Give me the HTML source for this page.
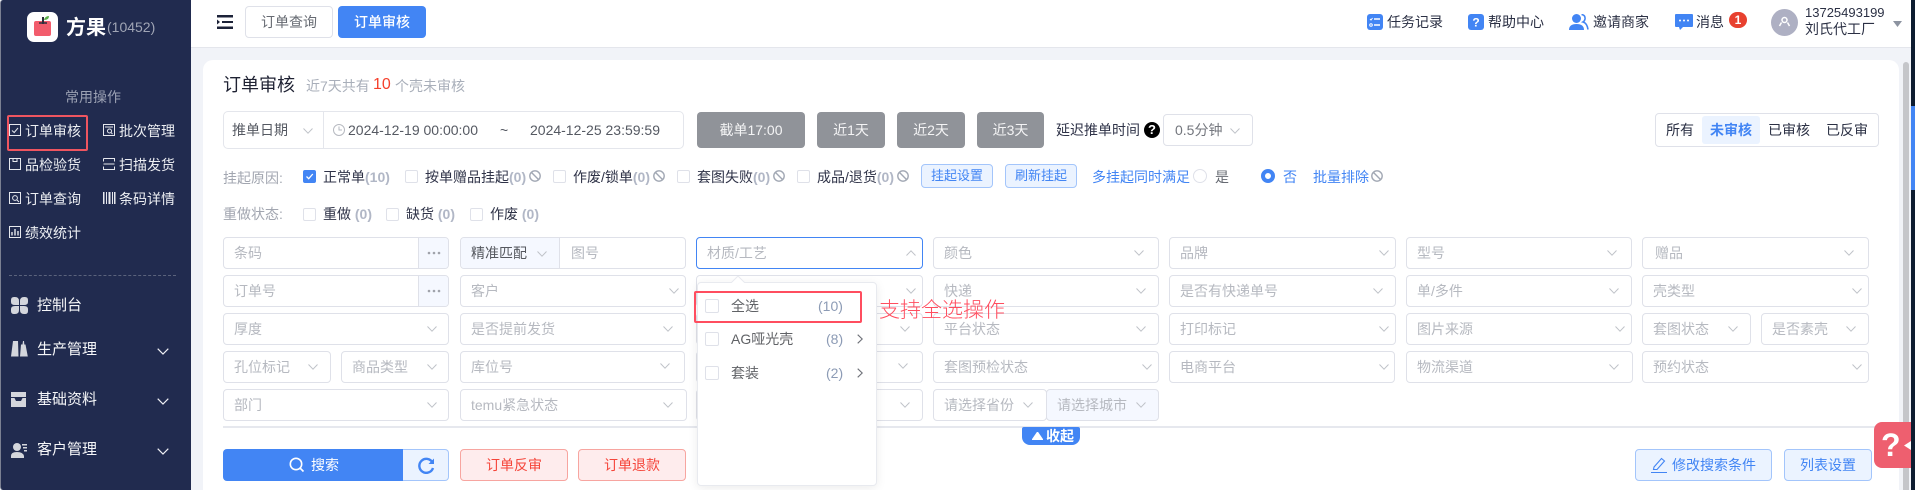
<!DOCTYPE html>
<html lang="zh-CN"><head><meta charset="utf-8"><title>订单审核</title>
<style>
html,body{margin:0;padding:0}
body{width:1915px;height:490px;overflow:hidden;position:relative;background:#f1f3f8;font:14px/20px "Liberation Sans","Noto Sans CJK SC",sans-serif;color:#2b3044}
div,span,svg{position:absolute;box-sizing:border-box}
span.i{position:static}
.t{height:20px;line-height:20px;white-space:nowrap}
.side{left:0;top:0;width:191px;height:490px;background:#212b4f;border-left:1px solid #7b8092;border-radius:3px 0 0 3px}
.q{color:#eceef2;font-size:14px}
.n{color:#f6f7f9;font-size:15px}
.f{height:32px;background:#fff;border:1px solid #dfe1e9;border-radius:4px}
.p{color:#b6b9c0;white-space:nowrap;height:20px;line-height:20px}
.ck{width:13px;height:13px;border:1px solid #dfe1e9;border-radius:2px;background:#fff}
.l{color:#2f3348}
.g{color:#b1b7c6;font-weight:700}
.gb{top:112px;height:36px;background:#909399;color:#f4f4f5;border-radius:4px;text-align:center;line-height:36px}
.bb{top:164px;height:24px;width:72px;border:1px solid #a3c5fb;background:#ebf3ff;color:#4285f4;font-size:13px;border-radius:4px;text-align:center;line-height:22px}
.rb{top:449px;height:32px;width:108px;background:#feeced;border:1px solid #f7a5a0;color:#f5453a;border-radius:4px;text-align:center;line-height:30px}
.blue{color:#4285f4}
</style></head><body>
<svg width="0" height="0" style="left:0;top:0"><defs>
<symbol id="dn" viewBox="0 0 10 6"><path d="M.5.5 5 5.2 9.5.5" fill="none" stroke="#bfc2c8" stroke-width="1"/></symbol>
<symbol id="wd" viewBox="0 0 12 7"><path d="M.7.7 6 6 11.3.7" fill="none" stroke="#f0f1f5" stroke-width="1.2"/></symbol>
<symbol id="ban" viewBox="0 0 12 12"><circle cx="6" cy="6" r="5.2" fill="none" stroke="#a2a8b4" stroke-width="1.4"/><path d="M2.4 2.4 9.6 9.6" stroke="#a2a8b4" stroke-width="1.4"/></symbol>
<symbol id="rt" viewBox="0 0 6 10"><path d="M.7.7 5.2 5 .7 9.3" fill="none" stroke="#6d7078" stroke-width="1.1"/></symbol>
<symbol id="dots" viewBox="0 0 14 4"><circle cx="2" cy="2" r="1.3" fill="#a0a3ab"/><circle cx="7" cy="2" r="1.3" fill="#a0a3ab"/><circle cx="12" cy="2" r="1.3" fill="#a0a3ab"/></symbol>
</defs></svg>

<!-- sidebar -->
<div class="side"></div>
<div style="left:27px;top:12px;width:31px;height:30px;background:#fff;border-radius:7px"></div>
<svg style="left:33px;top:15px" width="19" height="22" viewBox="0 0 19 22"><path d="M1 8q0-2 2-2h13q2 0 2 2v11q0 2-2 2H3q-2 0-2-2z" fill="#f25c6c"/><path d="M10 2v7" stroke="#2c2f3c" stroke-width="2"/><path d="M6 8h8" stroke="#2c2f3c" stroke-width="1.500"/><path d="M11 5q1-4 5-4q0 4-5 4z" fill="#5ab04a"/></svg>
<div class="t" style="left:66px;top:17px;color:#fff;font-size:20px;font-weight:700;line-height:22px;height:22px">方果</div>
<div class="t" style="left:107px;top:17px;color:#a0a5b5;font-size:14px">(10452)</div>
<div class="t" style="left:65px;top:87px;color:#9ba1b3">常用操作</div>
<div style="left:7px;top:115px;width:81px;height:36px;border:2px solid #ef5560;border-radius:2px"></div>

<svg style="left:9px;top:124px" width="13" height="13" viewBox="0 0 13 13" fill="none" stroke="#e6e8ee"><rect x=".5" y=".5" width="11" height="11"/><path d="M3 6.500 5.200 8.500 9 4"/></svg>
<div class="t q" style="left:25px;top:121px">订单审核</div>
<svg style="left:103px;top:124px" width="13" height="13" viewBox="0 0 13 13" fill="none" stroke="#e6e8ee"><rect x=".5" y=".5" width="11" height="11"/><path d="M2 3h8"/><circle cx="6.500" cy="7" r="2"/><path d="m8 8.500 1.500 1.500"/></svg>
<div class="t q" style="left:119px;top:121px">批次管理</div>

<svg style="left:9px;top:158px" width="13" height="13" viewBox="0 0 13 13" fill="none" stroke="#e6e8ee"><path d="M.5.5h11v11H.5zM4 .5v3h4v-3"/></svg>
<div class="t q" style="left:25px;top:155px">品检验货</div>
<svg style="left:103px;top:158px" width="13" height="13" viewBox="0 0 13 13" fill="none" stroke="#e6e8ee"><path d="M.5.5h11v3M.5.5v3M.5 6h11M.5 8.500v3h11v-3"/></svg>
<div class="t q" style="left:119px;top:155px">扫描发货</div>

<svg style="left:9px;top:192px" width="13" height="13" viewBox="0 0 13 13" fill="none" stroke="#e6e8ee"><rect x=".5" y=".5" width="11" height="11"/><circle cx="6" cy="6" r="2.400"/><path d="m8 8 2 2"/></svg>
<div class="t q" style="left:25px;top:189px">订单查询</div>
<svg style="left:103px;top:192px" width="13" height="13" viewBox="0 0 13 13" fill="#e6e8ee"><rect x="0" width="1.500" height="12"/><rect x="3" width="1" height="12"/><rect x="5.500" width="2" height="12"/><rect x="9" width="1" height="12"/><rect x="11" width="1.500" height="12"/></svg>
<div class="t q" style="left:119px;top:189px">条码详情</div>

<svg style="left:9px;top:226px" width="13" height="13" viewBox="0 0 13 13" fill="none" stroke="#e6e8ee"><rect x=".5" y=".5" width="11" height="11"/><path d="M3 9.500V6M6 9.500V3M9 9.500V5" stroke-width="1.400"/></svg>
<div class="t q" style="left:25px;top:223px">绩效统计</div>

<div style="left:9px;top:275px;width:167px;border-top:1px dashed #5b637c"></div>

<svg style="left:11px;top:297px" width="17" height="17" viewBox="0 0 17 17" fill="#d4d6dc"><path d="M0 3q0-3 3-3h1q4 0 4 4v4H4Q0 8 0 5zM9 4q0-4 4-4h1q3 0 3 3v2q0 3-4 3H9zM0 12q0-3 4-3h4v4q0 4-4 4H3q-3 0-3-3zM9 9h4q4 0 4 3v2q0 3-3 3h-1q-4 0-4-4z"/></svg>
<div class="t n" style="left:37px;top:296px">控制台</div>

<svg style="left:11px;top:341px" width="17" height="16" viewBox="0 0 17 16" fill="#d4d6dc"><path d="M2 0h5l.5 15.500H0zM10 3.500h1.500l.5-3.500h1l.3 3.500h1.200l2.300 12H9z"/></svg>
<div class="t n" style="left:37px;top:340px">生产管理</div>
<svg style="left:157px;top:348px" width="12" height="7"><use href="#wd"/></svg>

<svg style="left:11px;top:392px" width="15" height="15" viewBox="0 0 15 15" fill="#d4d6dc"><path d="M0 0h15v5H0zM0 6h3.500l1.500 3h5l1.500-3H15v9H0z"/></svg>
<div class="t n" style="left:37px;top:390px">基础资料</div>
<svg style="left:157px;top:398px" width="12" height="7"><use href="#wd"/></svg>

<svg style="left:11px;top:443px" width="16" height="15" viewBox="0 0 16 15" fill="#d4d6dc"><circle cx="6" cy="4" r="4"/><path d="M0 15v-2q0-4 6-4t7 4v2zM11 1h5v1.500h-5zM12 4h4v1.500h-4zM13 7h3v1.500h-3z"/></svg>
<div class="t n" style="left:37px;top:440px">客户管理</div>
<svg style="left:157px;top:448px" width="12" height="7"><use href="#wd"/></svg>

<!-- top bar -->
<div style="left:191px;top:0;width:1720px;height:48px;background:#fff;border-bottom:1px solid #e4e6ec"></div>
<svg style="left:217px;top:15px" width="16" height="14" viewBox="0 0 16 14" fill="#1c2238"><rect x="0" y="0" width="16" height="2.500"/><rect x="5" y="6" width="11" height="2"/><rect x="0" y="11.500" width="16" height="2.500"/><path d="M0 4.500 3 7 0 9.500z"/></svg>
<div class="t" style="left:245px;top:6px;width:88px;height:32px;border:1px solid #dfe1e9;border-radius:4px;text-align:center;line-height:30px;color:#666a72;background:#fff">订单查询</div>
<div class="t" style="left:338px;top:6px;width:88px;height:32px;border-radius:4px;text-align:center;line-height:32px;color:#fff;background:#4285f4;font-weight:500">订单审核</div>

<svg style="left:1367px;top:14px" width="16" height="16" viewBox="0 0 16 16"><rect width="16" height="16" rx="3" fill="#4285f4"/><path d="M7 5h6M7 11h6" stroke="#fff" stroke-width="1.400"/><path d="m3 5 1 1 1.500-2" stroke="#fff" fill="none"/><circle cx="4" cy="11" r="1.300" stroke="#fff" fill="none"/></svg>
<div class="t" style="left:1387px;top:12px">任务记录</div>
<svg style="left:1468px;top:14px" width="16" height="16" viewBox="0 0 16 16"><rect width="16" height="16" rx="3" fill="#4285f4"/><text x="8" y="12.500" text-anchor="middle" font-size="12" font-weight="700" fill="#fff" font-family="Liberation Sans">?</text></svg>
<div class="t" style="left:1488px;top:12px">帮助中心</div>
<svg style="left:1569px;top:14px" width="20" height="16" viewBox="0 0 20 16"><circle cx="7.500" cy="4.500" r="4.500" fill="#4285f4"/><path d="M0 16q0-6 7.500-6T15 16z" fill="#4285f4"/><path d="M12.500 .5q4 .5 3.500 4.500-.3 2-2 3 4 1 5 7.500" fill="none" stroke="#4285f4" stroke-width="1.600"/></svg>
<div class="t" style="left:1593px;top:12px">邀请商家</div>
<svg style="left:1675px;top:14px" width="18" height="17" viewBox="0 0 18 17"><path d="M1 0h16q1 0 1 1v11q0 1-1 1H8l-3 3-1-3H1q-1 0-1-1V1q0-1 1-1z" fill="#4285f4"/><circle cx="5" cy="6.500" r="1" fill="#fff"/><circle cx="9" cy="6.500" r="1" fill="#fff"/><circle cx="13" cy="6.500" r="1" fill="#fff"/></svg>
<div class="t" style="left:1696px;top:12px">消息</div>
<div style="left:1729px;top:12px;width:18px;height:16px;background:#e8412f;border-radius:8px;color:#fff;font-size:12px;font-weight:700;line-height:16px;text-align:center">1</div>
<div style="left:1771px;top:9px;width:27px;height:27px;border-radius:50%;background:#aeb0c3"></div>
<svg style="left:1778px;top:16px" width="13" height="13" viewBox="0 0 13 13" fill="none" stroke="#fff" stroke-width="1.500"><circle cx="6.500" cy="4" r="2.500"/><path d="M3.500 6.500 1.500 10M9.500 6.500l2 3.500"/></svg>
<div class="t" style="left:1805px;top:3px;font-size:13px">13725493199</div>
<div class="t" style="left:1805px;top:19px;font-size:14px">刘氏代工厂</div>
<svg style="left:1893px;top:21px" width="9" height="6"><path d="M0 0h9L4.500 6z" fill="#8c93a0"/></svg>

<!-- right edge -->
<div style="left:1911px;top:0;width:4px;height:490px;background:#0d1c30"></div>
<div style="left:1911px;top:106px;width:4px;height:84px;background:#4285f4"></div>
<div style="left:1903px;top:62px;width:6px;height:428px;background:#c5c6ca;border-radius:3px 3px 0 0"></div>

<!-- card -->
<div style="left:203px;top:60px;width:1696px;height:430px;background:#fff;border-radius:10px 10px 0 0"></div>
<div class="t" style="left:223px;top:74px;font-size:18px;line-height:22px;height:22px;color:#1f2233">订单审核</div>
<div class="t" style="left:306px;top:76px;color:#a9afba">近7天共有</div>
<div class="t" style="left:373px;top:75px;color:#f5402c;font-size:16px">10</div>
<div class="t" style="left:395px;top:76px;color:#a9afba">个壳未审核</div>

<div style="left:223px;top:111px;width:461px;height:38px;border:1px solid #e4e6ec;border-radius:5px;background:#fff"></div>
<div style="left:323px;top:112px;height:36px;border-left:1px solid #e4e6ec"></div>
<div class="t" style="left:232px;top:120px;color:#555962">推单日期</div>
<svg style="left:303px;top:128px" width="10" height="6"><use href="#dn"/></svg>
<svg style="left:333px;top:124px" width="12" height="12" viewBox="0 0 12 12" fill="none" stroke="#b6b9c0"><circle cx="6" cy="6" r="5.500"/><path d="M6 2.500V6h3"/></svg>
<div class="t" style="left:348px;top:120px;color:#555962">2024-12-19 00:00:00</div>
<div class="t" style="left:500px;top:120px;color:#555962">~</div>
<div class="t" style="left:530px;top:120px;color:#555962">2024-12-25 23:59:59</div>

<div class="gb t" style="left:697px;width:108px;height:36px;line-height:36px">截单17:00</div>
<div class="gb t" style="left:817px;width:68px;height:36px;line-height:36px">近1天</div>
<div class="gb t" style="left:897px;width:68px;height:36px;line-height:36px">近2天</div>
<div class="gb t" style="left:977px;width:67px;height:36px;line-height:36px">近3天</div>
<div class="t" style="left:1056px;top:120px;color:#2f3348">延迟推单时间</div>
<div style="left:1144px;top:122px;width:16px;height:16px;border-radius:50%;background:#000;color:#fff;font-size:13px;font-weight:700;line-height:16px;text-align:center">?</div>
<div class="f" style="left:1163px;top:114px;width:90px"></div>
<div class="t" style="left:1175px;top:120px;color:#73767d">0.5分钟</div>
<svg style="left:1230px;top:128px" width="10" height="6"><use href="#dn"/></svg>

<div style="left:1655px;top:113px;width:224px;height:34px;border:1px solid #dfe1e9;border-radius:4px"></div>
<div style="left:1702px;top:116px;width:58px;height:28px;background:#ebf3ff;border-radius:3px"></div>
<div class="t" style="left:1666px;top:120px">所有</div>
<div class="t blue" style="left:1710px;top:120px;font-weight:700">未审核</div>
<div class="t" style="left:1768px;top:120px">已审核</div>
<div class="t" style="left:1826px;top:120px">已反审</div>

<!-- row: hang -->
<div class="t" style="left:223px;top:168px;color:#a2a6b0">挂起原因:</div>
<div class="ck" style="left:303px;top:170px;background:#4285f4;border-color:#4285f4"></div>
<svg style="left:303px;top:170px" width="13" height="13" viewBox="0 0 13 13"><path d="m3.500 6.500 2.200 2.200L9.800 4" fill="none" stroke="#fff" stroke-width="1.300"/></svg>
<div class="t l" style="left:323px;top:167px">正常单<b class="g">(10)</b></div>
<div class="ck" style="left:405px;top:170px"></div>
<div class="t l" style="left:425px;top:167px">按单赠品挂起<b class="g">(0)</b></div>
<svg style="left:529px;top:170px" width="12" height="12"><use href="#ban"/></svg>
<div class="ck" style="left:553px;top:170px"></div>
<div class="t l" style="left:573px;top:167px">作废/锁单<b class="g">(0)</b></div>
<svg style="left:653px;top:170px" width="12" height="12"><use href="#ban"/></svg>
<div class="ck" style="left:677px;top:170px"></div>
<div class="t l" style="left:697px;top:167px">套图失败<b class="g">(0)</b></div>
<svg style="left:773px;top:170px" width="12" height="12"><use href="#ban"/></svg>
<div class="ck" style="left:797px;top:170px"></div>
<div class="t l" style="left:817px;top:167px">成品/退货<b class="g">(0)</b></div>
<svg style="left:897px;top:170px" width="12" height="12"><use href="#ban"/></svg>
<div class="bb" style="left:921px">挂起设置</div>
<div class="bb" style="left:1005px">刷新挂起</div>
<div class="t blue" style="left:1092px;top:167px">多挂起同时满足</div>
<div style="left:1193px;top:169px;width:14px;height:14px;border:1px solid #dfe1e9;border-radius:50%"></div>
<div class="t" style="left:1215px;top:167px;color:#666a72">是</div>
<div style="left:1261px;top:169px;width:14px;height:14px;border:4.500px solid #4285f4;border-radius:50%;background:#fff"></div>
<div class="t blue" style="left:1283px;top:167px">否</div>
<div class="t blue" style="left:1313px;top:167px">批量排除</div>
<svg style="left:1371px;top:170px" width="12" height="12"><use href="#ban"/></svg>

<!-- row: redo -->
<div class="t" style="left:223px;top:204px;color:#a2a6b0">重做状态:</div>
<div class="ck" style="left:303px;top:208px"></div>
<div class="t l" style="left:323px;top:204px">重做 <b class="g">(0)</b></div>
<div class="ck" style="left:386px;top:208px"></div>
<div class="t l" style="left:406px;top:204px">缺货 <b class="g">(0)</b></div>
<div class="ck" style="left:470px;top:208px"></div>
<div class="t l" style="left:490px;top:204px">作废 <b class="g">(0)</b></div>

<!-- row 1 -->
<div class="f" style="left:223px;top:237px;width:226px"></div>
<div style="left:418px;top:238px;width:30px;height:30px;background:#f5f8ff;border-left:1px solid #dfe1e9;border-radius:0 3px 3px 0"></div>
<svg style="left:427px;top:251px" width="14" height="4"><use href="#dots"/></svg>
<div class="p" style="left:234px;top:243px">条码</div>
<div class="f" style="left:460px;top:237px;width:226px"></div>
<div style="left:461px;top:238px;width:99px;height:30px;background:#f5f8ff;border-right:1px solid #dfe1e9;border-radius:3px 0 0 3px"></div>
<div class="t" style="left:471px;top:243px;color:#55585f">精准匹配</div>
<svg style="left:537px;top:251px" width="10" height="6"><use href="#dn"/></svg>
<div class="p" style="left:571px;top:243px">图号</div>
<div class="f" style="left:696px;top:237px;width:227px;border-color:#4285f4"></div>
<div class="p" style="left:707px;top:243px">材质/工艺</div>
<svg style="left:906px;top:250px;transform:rotate(180deg)" width="10" height="6"><use href="#dn"/></svg>
<div class="f" style="left:933px;top:237px;width:226px"></div><div class="p" style="left:944px;top:243px">颜色</div><svg style="left:1134px;top:250px" width="10" height="6"><use href="#dn"/></svg>
<div class="f" style="left:1169px;top:237px;width:227px"></div><div class="p" style="left:1180px;top:243px">品牌</div><svg style="left:1379px;top:250px" width="10" height="6"><use href="#dn"/></svg>
<div class="f" style="left:1406px;top:237px;width:226px"></div><div class="p" style="left:1417px;top:243px">型号</div><svg style="left:1607px;top:250px" width="10" height="6"><use href="#dn"/></svg>
<div class="f" style="left:1642px;top:237px;width:227px"></div><div class="p" style="left:1655px;top:243px">赠品</div><svg style="left:1844px;top:250px" width="10" height="6"><use href="#dn"/></svg>

<!-- row 2 -->
<div class="f" style="left:223px;top:275px;width:226px"></div>
<div style="left:418px;top:276px;width:30px;height:30px;background:#f5f8ff;border-left:1px solid #dfe1e9;border-radius:0 3px 3px 0"></div>
<svg style="left:427px;top:289px" width="14" height="4"><use href="#dots"/></svg>
<div class="p" style="left:234px;top:281px">订单号</div>
<div class="f" style="left:460px;top:275px;width:226px"></div><div class="p" style="left:471px;top:281px">客户</div><svg style="left:669px;top:288px" width="10" height="6"><use href="#dn"/></svg>
<div class="f" style="left:696px;top:275px;width:227px"></div><svg style="left:906px;top:288px" width="10" height="6"><use href="#dn"/></svg>
<div class="f" style="left:933px;top:275px;width:226px"></div><div class="p" style="left:944px;top:281px">快递</div><svg style="left:1136px;top:288px" width="10" height="6"><use href="#dn"/></svg>
<div class="f" style="left:1169px;top:275px;width:227px"></div><div class="p" style="left:1180px;top:281px">是否有快递单号</div><svg style="left:1373px;top:288px" width="10" height="6"><use href="#dn"/></svg>
<div class="f" style="left:1406px;top:275px;width:226px"></div><div class="p" style="left:1417px;top:281px">单/多件</div><svg style="left:1609px;top:288px" width="10" height="6"><use href="#dn"/></svg>
<div class="f" style="left:1642px;top:275px;width:227px"></div><div class="p" style="left:1653px;top:281px">壳类型</div><svg style="left:1852px;top:288px" width="10" height="6"><use href="#dn"/></svg>

<!-- row 3 -->
<div class="f" style="left:223px;top:313px;width:226px"></div><div class="p" style="left:234px;top:319px">厚度</div><svg style="left:427px;top:326px" width="10" height="6"><use href="#dn"/></svg>
<div class="f" style="left:460px;top:313px;width:226px"></div><div class="p" style="left:471px;top:319px">是否提前发货</div><svg style="left:663px;top:326px" width="10" height="6"><use href="#dn"/></svg>
<div class="f" style="left:696px;top:313px;width:227px"></div><svg style="left:900px;top:326px" width="10" height="6"><use href="#dn"/></svg>
<div class="f" style="left:933px;top:313px;width:226px"></div><div class="p" style="left:944px;top:319px">平台状态</div><svg style="left:1136px;top:326px" width="10" height="6"><use href="#dn"/></svg>
<div class="f" style="left:1169px;top:313px;width:227px"></div><div class="p" style="left:1180px;top:319px">打印标记</div><svg style="left:1379px;top:326px" width="10" height="6"><use href="#dn"/></svg>
<div class="f" style="left:1406px;top:313px;width:226px"></div><div class="p" style="left:1417px;top:319px">图片来源</div><svg style="left:1615px;top:326px" width="10" height="6"><use href="#dn"/></svg>
<div class="f" style="left:1642px;top:313px;width:109px"></div><div class="p" style="left:1653px;top:319px">套图状态</div><svg style="left:1728px;top:326px" width="10" height="6"><use href="#dn"/></svg>
<div class="f" style="left:1761px;top:313px;width:108px"></div><div class="p" style="left:1772px;top:319px">是否素壳</div><svg style="left:1846px;top:326px" width="10" height="6"><use href="#dn"/></svg>

<!-- row 4 -->
<div class="f" style="left:223px;top:351px;width:108px"></div><div class="p" style="left:234px;top:357px">孔位标记</div><svg style="left:308px;top:364px" width="10" height="6"><use href="#dn"/></svg>
<div class="f" style="left:341px;top:351px;width:108px"></div><div class="p" style="left:352px;top:357px">商品类型</div><svg style="left:427px;top:364px" width="10" height="6"><use href="#dn"/></svg>
<div class="f" style="left:460px;top:351px;width:225px"></div><div class="p" style="left:471px;top:357px">库位号</div><svg style="left:660px;top:363px" width="10" height="6"><use href="#dn"/></svg>
<div class="f" style="left:696px;top:351px;width:227px"></div><svg style="left:898px;top:363px" width="10" height="6"><use href="#dn"/></svg>
<div class="f" style="left:933px;top:351px;width:226px"></div><div class="p" style="left:944px;top:357px">套图预检状态</div><svg style="left:1142px;top:364px" width="10" height="6"><use href="#dn"/></svg>
<div class="f" style="left:1169px;top:351px;width:226px"></div><div class="p" style="left:1180px;top:357px">电商平台</div><svg style="left:1379px;top:364px" width="10" height="6"><use href="#dn"/></svg>
<div class="f" style="left:1406px;top:351px;width:227px"></div><div class="p" style="left:1417px;top:357px">物流渠道</div><svg style="left:1609px;top:364px" width="10" height="6"><use href="#dn"/></svg>
<div class="f" style="left:1642px;top:351px;width:227px"></div><div class="p" style="left:1653px;top:357px">预约状态</div><svg style="left:1852px;top:364px" width="10" height="6"><use href="#dn"/></svg>

<!-- row 5 -->
<div class="f" style="left:223px;top:389px;width:226px"></div><div class="p" style="left:234px;top:395px">部门</div><svg style="left:427px;top:402px" width="10" height="6"><use href="#dn"/></svg>
<div class="f" style="left:460px;top:389px;width:227px"></div><div class="p" style="left:471px;top:395px">temu紧急状态</div><svg style="left:663px;top:402px" width="10" height="6"><use href="#dn"/></svg>
<div class="f" style="left:696px;top:389px;width:227px"></div><svg style="left:900px;top:402px" width="10" height="6"><use href="#dn"/></svg>
<div class="f" style="left:933px;top:389px;width:114px"></div><div class="p" style="left:944px;top:395px">请选择省份</div><svg style="left:1023px;top:402px" width="10" height="6"><use href="#dn"/></svg>
<div class="f" style="left:1046px;top:389px;width:113px;background:#f5f8ff"></div><div class="p" style="left:1057px;top:395px">请选择城市</div><svg style="left:1136px;top:402px" width="10" height="6"><use href="#dn"/></svg>

<div style="left:223px;top:426px;width:1676px;height:2px;background:#e6e8ee"></div>
<div style="left:1022px;top:427px;width:58px;height:18px;background:#4285f4;border-radius:2px 2px 8px 8px"></div>
<svg style="left:1032px;top:432px" width="11" height="8"><path d="M5.500 0 11 8H0z" fill="#fff" stroke="#fff" stroke-linejoin="round"/></svg>
<div class="t" style="left:1046px;top:426px;color:#fff;font-weight:700;height:20px">收起</div>

<!-- bottom buttons -->
<div style="left:223px;top:449px;width:180px;height:32px;background:#4285f4;border-radius:4px 0 0 4px"></div>
<svg style="left:289px;top:457px" width="16" height="16" viewBox="0 0 16 16" fill="none" stroke="#fff" stroke-width="1.600"><circle cx="7" cy="7" r="5.700"/><path d="m11 11 3.500 3.500"/></svg>
<div class="t" style="left:311px;top:455px;color:#fff">搜索</div>
<div style="left:403px;top:449px;width:46px;height:32px;background:#ebf3ff;border:1px solid #a3c5fb;border-left:0;border-radius:0 4px 4px 0"></div>
<svg style="left:418px;top:457px" width="17" height="17" viewBox="0 0 17 17" fill="none" stroke="#4285f4" stroke-width="2.400"><path d="M14.500 5.500A7 7 0 1 0 15 11"/><path d="M16 1.500v5.500h-5.500" fill="#4285f4" stroke="none"/></svg>
<div class="rb" style="left:460px">订单反审</div>
<div class="rb" style="left:578px">订单退款</div>

<div class="t" style="left:1635px;top:449px;width:137px;height:32px;background:#ebf3ff;border:1px solid #a3c5fb;border-radius:4px;color:#4285f4;line-height:30px;padding-left:36px">修改搜索条件</div>
<svg style="left:1651px;top:457px" width="16" height="16" viewBox="0 0 16 16" fill="none" stroke="#4285f4" stroke-width="1.100"><path d="M3 10 10.500 1.500l3 2.500L6 12.500H2.500zM0 15.500h16"/></svg>
<div class="t" style="left:1784px;top:449px;width:88px;height:32px;background:#ebf3ff;border:1px solid #a3c5fb;border-radius:4px;color:#4285f4;line-height:30px;text-align:center">列表设置</div>

<div style="left:1874px;top:422px;width:37px;height:46px;background:#ee5f6f;border-radius:8px 0 0 8px"></div>
<div class="t" style="left:1881px;top:429px;color:#fff;font-size:32px;font-weight:700;height:32px;line-height:32px">?</div>
<svg style="left:1904px;top:441px" width="7" height="9"><path d="M7 0v9L0 4.500z" fill="#fff"/></svg>

<!-- dropdown -->
<div style="left:697px;top:282px;width:180px;height:204px;background:#fff;border:1px solid #e8eaef;border-radius:4px;box-shadow:0 2px 10px rgba(0,0,0,.08)"></div>
<svg style="left:731px;top:276px" width="14" height="7"><path d="M0 7 7 0l7 7" fill="#fff" stroke="#e8eaef"/></svg>
<div class="ck" style="left:705px;top:299px;width:14px;height:14px"></div>
<div class="t" style="left:731px;top:296px;color:#606266">全选</div>
<div class="t" style="left:818px;top:296px;color:#8c9bb5">(10)</div>
<div class="ck" style="left:705px;top:332px;width:14px;height:14px"></div>
<div class="t" style="left:731px;top:329px;color:#606266">AG哑光壳</div>
<div class="t" style="left:826px;top:329px;color:#8c9bb5">(8)</div>
<svg style="left:857px;top:334px" width="6" height="10"><use href="#rt"/></svg>
<div class="ck" style="left:705px;top:366px;width:14px;height:14px"></div>
<div class="t" style="left:731px;top:363px;color:#606266">套装</div>
<div class="t" style="left:826px;top:363px;color:#8c9bb5">(2)</div>
<svg style="left:857px;top:368px" width="6" height="10"><use href="#rt"/></svg>
<div style="left:694px;top:291px;width:168px;height:32px;border:2px solid #ff4d5f;border-radius:2px"></div>
<div class="t" style="left:879px;top:299px;color:#ff4d5f;font-size:21px;height:24px;line-height:24px;font-weight:300">支持全选操作</div>
</body></html>
